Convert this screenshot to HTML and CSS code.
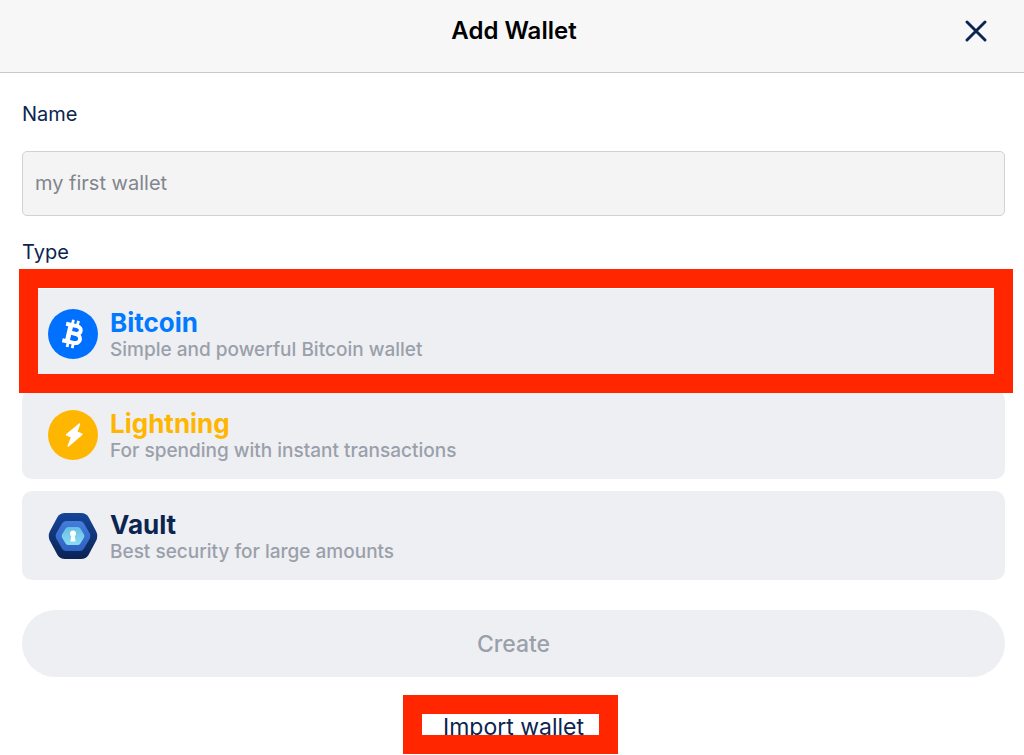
FILE: index.html
```html
<!DOCTYPE html>
<html lang="en">
<head>
    <meta charset="UTF-8">
    <meta name="viewport" content="width=device-width, initial-scale=1.0">
    <title>Add Wallet</title>
    <link rel="stylesheet" href="styles.css">
</head>
<body>
    <header class="header">
        <h1>Add Wallet</h1>
        <button type="button" class="close" aria-label="Close">
            <svg width="22" height="22" viewBox="0 0 22 22">
                <path d="M2 2L20 20M20 2L2 20" fill="none" stroke="#0c2550" stroke-width="2.9" stroke-linecap="round"/>
            </svg>
        </button>
    </header>

    <form class="wallet-form">
        <label class="field-label" for="wallet-name">Name</label>
        <input type="text" class="name-input" id="wallet-name" placeholder="my first wallet">

        <h2 class="field-label type-label">Type</h2>
        <div class="wallet-types">
            <!-- Bitcoin -->
            <div class="highlight">
                <button type="button" class="wallet-card bitcoin">
                    <svg class="wallet-icon" viewBox="0 0 50 50" aria-hidden="true">
                        <circle cx="25" cy="25" r="25" fill="#0070ff"/>
                        <g transform="rotate(13 25 25)" fill="none" stroke="#fff">
                            <path d="M16 16.500H27C33.500 16.500 33.500 24.300 27 24.300H21M27 24.300C35 24.300 35 33.500 27.500 33.500H16" stroke-width="4"/>
                            <path d="M21 16V34" stroke-width="4.800"/>
                            <path d="M22.200 11V17M27.400 11V17M22.200 33V39M27.400 33V39" stroke-width="2.800"/>
                        </g>
                    </svg>
                    <span class="wallet-text">
                        <span class="wallet-title">Bitcoin</span>
                        <span class="wallet-info">Simple and powerful Bitcoin wallet</span>
                    </span>
                </button>
            </div>

            <!-- Lightning -->
            <button type="button" class="wallet-card lightning">
                <svg class="wallet-icon" viewBox="0 0 50 50" aria-hidden="true">
                    <circle cx="25" cy="25" r="25" fill="#ffb600"/>
                    <path d="M31.500 14L18.500 24.800L23.800 27L20.300 36L33.800 24.300L28.600 22Z" fill="#fff" stroke="#fff" stroke-width="1.600" stroke-linejoin="round"/>
                </svg>
                <span class="wallet-text">
                    <span class="wallet-title">Lightning</span>
                    <span class="wallet-info">For spending with instant transactions</span>
                </span>
            </button>

            <!-- Vault -->
            <button type="button" class="wallet-card vault">
                <svg class="wallet-icon" viewBox="0 0 50 50" aria-hidden="true">
                    <defs>
                        <linearGradient id="vault-outer" x1="0" y1="0" x2="0" y2="1">
                            <stop offset="0" stop-color="#16459a"/>
                            <stop offset="1" stop-color="#0b2354"/>
                        </linearGradient>
                        <linearGradient id="vault-middle" x1="0" y1="0" x2="0" y2="1">
                            <stop offset="0" stop-color="#447ddb"/>
                            <stop offset="1" stop-color="#2f62c2"/>
                        </linearGradient>
                        <linearGradient id="vault-inner" x1="0" y1="0" x2="0" y2="1">
                            <stop offset="0" stop-color="#68bfe5"/>
                            <stop offset="1" stop-color="#8bdcf2"/>
                        </linearGradient>
                    </defs>
                    <path d="M17 2H33Q38 2 40.500 6L48 20Q50.500 25 48 30L40.500 44Q38 48 33 48H17Q12 48 9.500 44L2 30Q-0.500 25 2 20L9.500 6Q12 2 17 2Z" fill="url(#vault-outer)"/>
                    <path d="M18 10H32Q34.500 10 36 12.500L41.800 22.500Q43 25 41.800 27.500L36 37.500Q34.500 40 32 40H18Q15.500 40 14 37.500L8.200 27.500Q7 25 8.200 22.500L14 12.500Q15.500 10 18 10Z" fill="url(#vault-middle)"/>
                    <path d="M20.500 16H29.500Q31.500 16 32.400 17.600L36 23.500Q36.800 25 36 26.500L32.400 32.400Q31.500 34 29.500 34H20.500Q18.500 34 17.600 32.400L14 26.500Q13.200 25 14 23.500L17.600 17.600Q18.500 16 20.500 16Z" fill="url(#vault-inner)"/>
                    <circle cx="25" cy="22.500" r="3" fill="#fff"/>
                    <path d="M23.500 23H26.500L27.600 30.400H22.400Z" fill="#fff"/>
                </svg>
                <span class="wallet-text">
                    <span class="wallet-title">Vault</span>
                    <span class="wallet-info">Best security for large amounts</span>
                </span>
            </button>
        </div>

        <button type="submit" class="create" disabled>Create</button>
        <a href="#import" class="import-link">Import wallet</a>
    </form>
</body>
</html>
```

FILE: styles.css
```css
* {
    box-sizing: border-box;
}

body {
    margin: 0;
    background: #fff;
    color: #0c2550;
    font-family: Inter, 'Liberation Sans', sans-serif;
}

button,
input {
    font-family: inherit;
}

/* Title bar */
.header {
    display: grid;
    grid-template-columns: 60px 1fr 60px;
    align-items: center;
    padding: 8px 18px 18px 22px;
    background: #f7f7f7;
    border-bottom: 1px solid #c8c8c8;
}

.header h1 {
    grid-column: 2;
    margin: 0;
    color: #000;
    font-size: 24px;
    font-weight: 600;
    line-height: 46px;
    text-align: center;
}

.close {
    display: flex;
    align-items: center;
    justify-content: center;
    height: 46px;
    padding: 0;
    background: none;
    border: none;
    cursor: pointer;
}

/* Form */
.wallet-form {
    display: flex;
    flex-direction: column;
    padding: 27px 19px 0 22px;
}

.field-label {
    margin: 0;
    font-size: 20px;
    font-weight: 400;
    line-height: 28px;
}

.name-input {
    width: 100%;
    height: 65px;
    margin: 23px 0 22px;
    padding: 0 12px 2px;
    background: #f4f4f4;
    border: 1px solid #d2d2d2;
    border-radius: 5px;
    color: #0c2550;
    font-size: 20px;
}

.name-input::placeholder {
    color: #81868e;
    opacity: 1;
}

/* Wallet types */
.wallet-types {
    display: flex;
    flex-direction: column;
    gap: 12px;
    padding-top: 23px;
}

.wallet-card {
    display: flex;
    align-items: center;
    gap: 12px;
    width: 100%;
    height: 89px;
    padding: 0 26px;
    background: #eeeff3;
    border: none;
    border-radius: 10px;
    text-align: left;
    cursor: pointer;
}

.wallet-icon {
    width: 50px;
    height: 50px;
    flex-shrink: 0;
}

.wallet-text {
    display: flex;
    flex-direction: column;
    padding-top: 4px;
}

.wallet-title {
    font-size: 26px;
    font-weight: 700;
    line-height: 28px;
}

.wallet-info {
    color: #9aa0aa;
    font-size: 19px;
    font-weight: 500;
    line-height: 26px;
}

.bitcoin .wallet-title {
    color: #007aff;
}

.lightning .wallet-title {
    color: #ffb600;
}

.vault .wallet-title {
    color: #0c2550;
}

.highlight {
    position: relative;
}

.highlight::after {
    content: "";
    position: absolute;
    top: -20px;
    right: -8px;
    bottom: -15px;
    left: -3px;
    border: 19px solid #ff2600;
    pointer-events: none;
}

/* Actions */
.create {
    height: 67px;
    margin-top: 30px;
    background: #eeeff3;
    border: none;
    border-radius: 34px;
    color: #9aa0aa;
    font-size: 23px;
    font-weight: 500;
}

.import-link {
    align-self: center;
    width: 215px;
    height: 59px;
    margin: 18px 6px 0 0;
    padding-left: 6px;
    border: 19px solid #ff2600;
    color: #0c2550;
    font-size: 23px;
    line-height: 27px;
    text-align: center;
    text-decoration: none;
    white-space: nowrap;
    overflow: hidden;
}
```
